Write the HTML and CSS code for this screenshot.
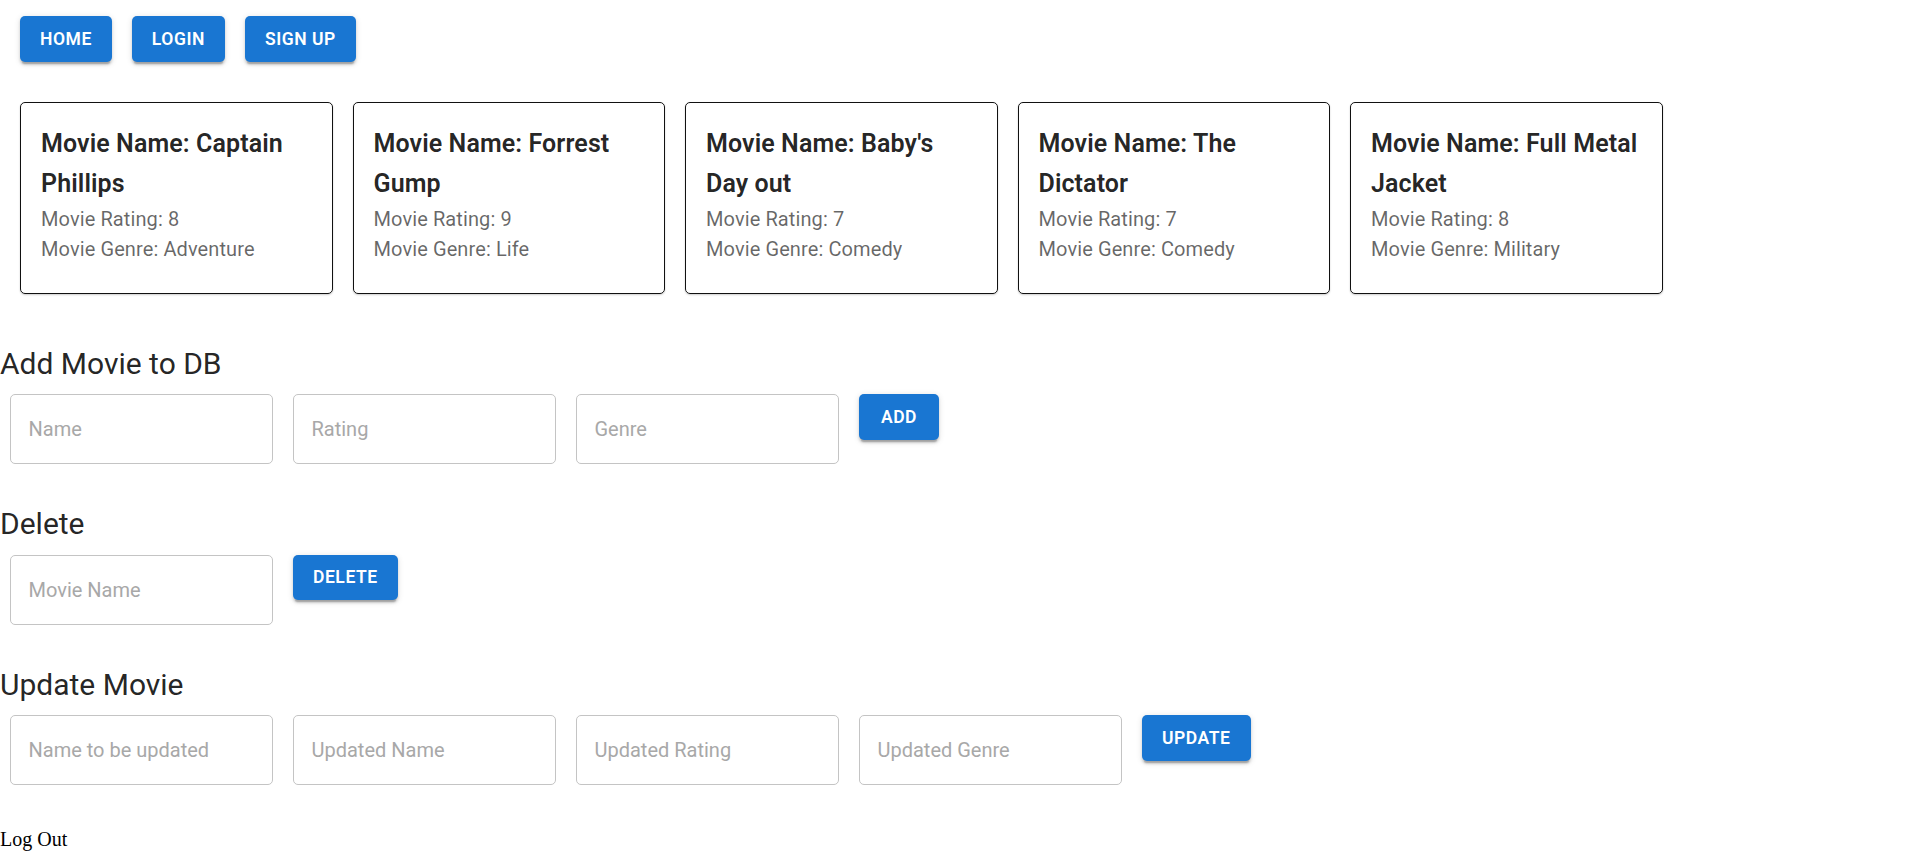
FILE: index.html
```html
<!DOCTYPE html>
<html>
<head>
<meta charset="utf-8">
<link rel="stylesheet" href="styles.css">
</head>
<body>
<div class="nav">
  <button class="btn">Home</button>
  <button class="btn">Login</button>
  <button class="btn">Sign Up</button>
</div>
<div class="cards">
  <div class="card">
    <div class="card-title">Movie Name: Captain Phillips</div>
    <div class="card-text">Movie Rating: 8</div>
    <div class="card-text">Movie Genre: Adventure</div>
  </div>
  <div class="card">
    <div class="card-title">Movie Name: Forrest Gump</div>
    <div class="card-text">Movie Rating: 9</div>
    <div class="card-text">Movie Genre: Life</div>
  </div>
  <div class="card">
    <div class="card-title">Movie Name: Baby's Day out</div>
    <div class="card-text">Movie Rating: 7</div>
    <div class="card-text">Movie Genre: Comedy</div>
  </div>
  <div class="card">
    <div class="card-title">Movie Name: The Dictator</div>
    <div class="card-text">Movie Rating: 7</div>
    <div class="card-text">Movie Genre: Comedy</div>
  </div>
  <div class="card">
    <div class="card-title">Movie Name: Full Metal Jacket</div>
    <div class="card-text">Movie Rating: 8</div>
    <div class="card-text">Movie Genre: Military</div>
  </div>
</div>

<div class="section">
  <div class="heading">Add Movie to DB</div>
  <div class="row">
    <input class="field" placeholder="Name">
    <input class="field" placeholder="Rating">
    <input class="field" placeholder="Genre">
    <button class="btn">Add</button>
  </div>
</div>

<div class="section">
  <div class="heading">Delete</div>
  <div class="row">
    <input class="field" placeholder="Movie Name">
    <button class="btn">Delete</button>
  </div>
</div>

<div class="section">
  <div class="heading">Update Movie</div>
  <div class="row">
    <input class="field" placeholder="Name to be updated">
    <input class="field" placeholder="Updated Name">
    <input class="field" placeholder="Updated Rating">
    <input class="field" placeholder="Updated Genre">
    <button class="btn">Update</button>
  </div>
</div>

<div class="logout">Log Out</div>
</body>
</html>
```
FILE: styles.css
```css
html, body {
  margin: 0;
  padding: 0;
  background: #fff;
}
body {
  font-family: Roboto, "Liberation Sans", sans-serif;
}
.nav {
  display: flex;
  gap: 20px;
  padding: 16px 0 0 20px;
}
.btn {
  font-family: Roboto, "Liberation Sans", sans-serif;
  font-weight: 600;
  font-size: 17.5px;
  line-height: 30.6px;
  letter-spacing: 0.55px;
  text-transform: uppercase;
  color: #fff;
  background: #1976d2;
  border: none;
  border-radius: 5px;
  padding: 7.5px 20px;
  min-width: 80px;
  box-shadow: 0 3.75px 1.25px -2.5px rgba(0,0,0,0.2), 0 2.5px 2.5px 0 rgba(0,0,0,0.14), 0 1.25px 6.25px 0 rgba(0,0,0,0.12);
  cursor: pointer;
}
.cards {
  display: flex;
  gap: 20px;
  padding: 40px 0 0 20px;
}
.card {
  box-sizing: border-box;
  width: 312.5px;
  border: 1px solid #111;
  border-radius: 5px;
  padding: 21px 20px 29px 20px;
  box-shadow: 0 1px 2px rgba(0,0,0,0.2);
}
.card-title {
  font-size: 25px;
  font-weight: 600;
  line-height: 40px;
  letter-spacing: 0.1px;
  color: rgba(0,0,0,0.87);
}
.card-text {
  font-size: 20px;
  line-height: 30px;
  letter-spacing: 0.1px;
  color: rgba(0,0,0,0.6);
}
.section {
  padding-top: 50px;
}
.section + .section {
  padding-top: 40px;
}
.heading {
  font-size: 30px;
  line-height: 40px;
  font-weight: 400;
  color: rgba(0,0,0,0.87);
}
.row {
  display: flex;
  align-items: flex-start;
  gap: 20px;
  padding: 10.5px 0 0 10px;
}
.field {
  box-sizing: border-box;
  width: 263px;
  height: 70px;
  border: 1px solid #c4c4c4;
  border-radius: 5px;
  padding: 0 17.5px;
  font-family: Roboto, "Liberation Sans", sans-serif;
  font-size: 20px;
  color: rgba(0,0,0,0.87);
  outline: none;
}
.field::placeholder {
  color: #a8a8a8;
  opacity: 1;
}
.logout {
  font-family: "Liberation Serif", "Times New Roman", serif;
  font-size: 20px;
  line-height: 23px;
  color: #000;
  padding-top: 43px;
}
```
